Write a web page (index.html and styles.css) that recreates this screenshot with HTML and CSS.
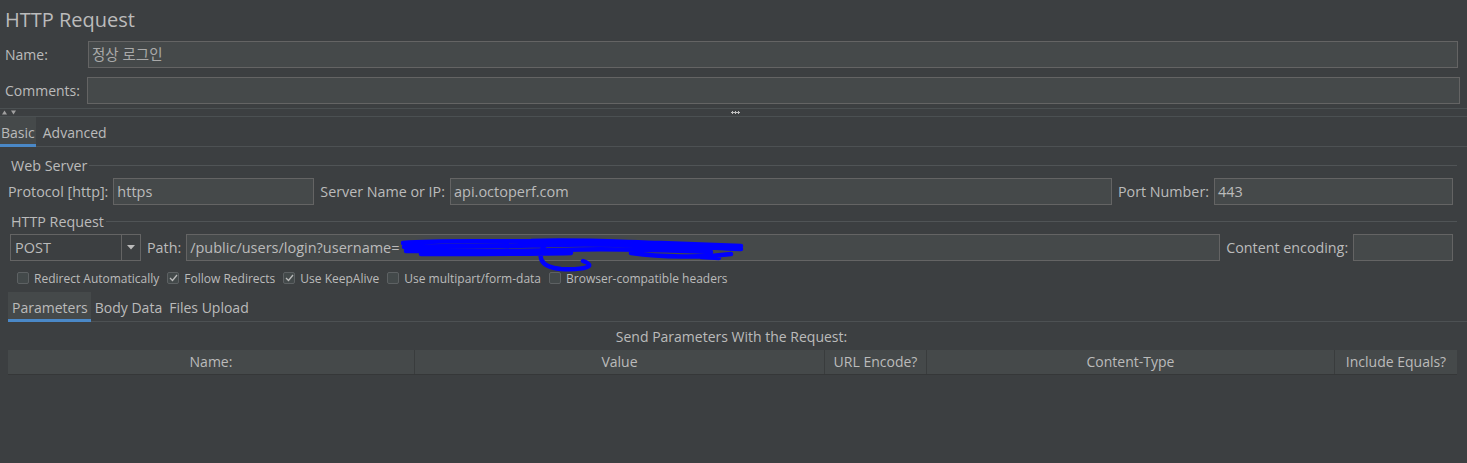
FILE: index.html
```html
<!DOCTYPE html>
<html>
<head>
<meta charset="utf-8">
<link rel="stylesheet" href="styles.css">
</head>
<body>
<div class="page">
  <div class="title">HTTP Request</div>
  <div class="nrow">
    <span class="lbl">Name:</span>
    <div class="input name-input">정상 로그인</div>
  </div>
  <div class="nrow second">
    <span class="lbl">Comments:</span>
    <div class="input comments-input"></div>
  </div>
  <div class="splitter">
    <svg class="arrows" width="16" height="5" viewBox="0 0 16 5"><path d="M1 4.5 L3.5 0.5 L6 4.5 Z" fill="#a0a0a0"/><path d="M10 0.5 L15 0.5 L12.5 4.5 Z" fill="#a0a0a0"/></svg>
    <span class="dots"></span>
  </div>
  <div class="tabs">
    <div class="tab active">Basic</div>
    <div class="tab">Advanced</div>
  </div>
  <div class="group">
    <div class="legend first"><span>Web Server</span></div>
    <div class="frow">
      <span class="flbl">Protocol [http]:</span>
      <div class="input w-proto">https</div>
      <span class="flbl">Server Name or IP:</span>
      <div class="input w-server">api.octoperf.com</div>
      <span class="flbl">Port Number:</span>
      <div class="input w-port">443</div>
    </div>
    <div class="legend"><span>HTTP Request</span></div>
    <div class="frow">
      <div class="combo"><span class="combo-val">POST</span><span class="combo-btn"><svg width="8" height="5" viewBox="0 0 8 5"><path d="M0 0 L8 0 L4 4.5 Z" fill="#bbbbbb"/></svg></span></div>
      <span class="flbl">Path:</span>
      <div class="input w-path">/public/users/login?username=<svg class="scribble" width="345" height="36" viewBox="0 0 345 36"><path d="M2 6 C40 3 90 5 130 4 C170 2 220 5 260 6 C290 7 320 8 340 9 M3 10 C50 8 100 10 150 8 C200 6 250 9 300 10 C320 11 332 12 340 12 M5 14 C60 13 110 15 160 13 C210 11 260 13 310 15 M20 17 C80 17 130 17 170 16 M145 7 C136 18 137 30 160 32 C185 33 196 29 182 24 M230 16 C260 20 300 21 330 17 M300 20 L318 21" stroke="#0000ff" stroke-width="4.5" fill="none" stroke-linecap="round"/></svg></div>
      <span class="flbl">Content encoding:</span>
      <div class="input w-enc"></div>
    </div>
    <div class="checks">
      <label class="chk"><span class="box"></span>Redirect Automatically</label>
      <label class="chk"><span class="box on"><svg width="9" height="8" viewBox="0 0 9 8"><path d="M1 4 L3.5 6.5 L8 1" stroke="#bbbbbb" stroke-width="1.3" fill="none"/></svg></span>Follow Redirects</label>
      <label class="chk"><span class="box on"><svg width="9" height="8" viewBox="0 0 9 8"><path d="M1 4 L3.5 6.5 L8 1" stroke="#bbbbbb" stroke-width="1.3" fill="none"/></svg></span>Use KeepAlive</label>
      <label class="chk"><span class="box"></span>Use multipart/form-data</label>
      <label class="chk"><span class="box"></span>Browser-compatible headers</label>
    </div>
    <div class="tabs subtabs">
      <div class="tab active">Parameters</div>
      <div class="tab">Body Data</div>
      <div class="tab">Files Upload</div>
    </div>
    <div class="send">Send Parameters With the Request:</div>
    <div class="thead">
      <div class="th c-name">Name:</div>
      <div class="th c-value">Value</div>
      <div class="th c-url">URL Encode?</div>
      <div class="th c-ct">Content-Type</div>
      <div class="th c-inc">Include Equals?</div>
    </div>
  </div>
</div>
</body>
</html>
```
FILE: styles.css
```css
html, body {
  margin: 0;
  padding: 0;
  background: #3c3f41;
}
body {
  width: 1467px;
  height: 463px;
  overflow: hidden;
  font-family: "Open Sans", "Noto Sans", "Noto Sans CJK KR", sans-serif;
  font-size: 14px;
  color: #bbbbbb;
}
.page {
  display: flex;
  flex-direction: column;
}
.title {
  font-size: 20px;
  padding: 6px 0 0 5px;
  height: 41px;
  line-height: 28px;
  box-sizing: border-box;
}
.nrow {
  display: grid;
  grid-template-columns: 82px 1fr;
  align-items: center;
  padding-left: 5px;
  height: 27px;
}
.nrow.second {
  margin-top: 9px;
}
.lbl {
  font-size: 14px;
}
.input {
  background: #45494a;
  border: 1px solid #646464;
  box-sizing: border-box;
  height: 27px;
  line-height: 25px;
  padding-left: 3px;
  font-size: 14.5px;
  color: #bbbbbb;
  white-space: nowrap;
  position: relative;
}
.name-input {
  margin-right: 9px;
  margin-left: 1px;
  color: #a9a9a9;
}
.comments-input {
  margin-right: 7px;
}
.splitter {
  height: 7px;
  border-top: 1px solid #4b5052;
  border-bottom: 1px solid #4b5052;
  margin-top: 4px;
  position: relative;
  display: flex;
  align-items: center;
  justify-content: center;
}
.arrows {
  position: absolute;
  left: 1px;
  top: 1px;
}
.dots {
  width: 9px;
  height: 3px;
  background: radial-gradient(circle, #c0c0c0 1.2px, transparent 1.4px) 0 0 / 3px 3px repeat-x;
  margin-left: 3px;
}
.tabs {
  display: flex;
  height: 30px;
  border-bottom: 1px solid #4d5153;
  box-sizing: border-box;
}
.tab {
  font-size: 14px;
  line-height: 31px;
  padding: 0 1px;
  margin-right: 6px;
  box-sizing: border-box;
  height: 30px;
}
.tab.active {
  background: #45494a;
  border-bottom: 3px solid #4a88c7;
}
.group {
  padding: 0 8px;
  display: flex;
  flex-direction: column;
}
.legend {
  display: flex;
  align-items: center;
  height: 20px;
  margin-top: 6px;
  padding-left: 3px;
  font-size: 14.3px;
}
.legend.first {
  margin-top: 8px;
}
.legend::after {
  content: "";
  flex: 1;
  height: 1px;
  background: #505456;
  margin-left: 2px;
  margin-right: 2px;
}
.frow {
  display: flex;
  align-items: center;
  height: 27px;
  margin-top: 3px;
}
.flbl {
  font-size: 14.3px;
  margin: 0 5px 0 6px;
  white-space: nowrap;
}
.frow .flbl:first-child { margin-left: 0; }
.w-proto { width: 201px; }
.w-server { width: 662px; }
.w-port { width: 239px; }
.combo {
  margin-left: 2px;
  width: 131px;
  height: 27px;
  border: 1px solid #646464;
  box-sizing: border-box;
  display: flex;
  background: #3c3f41;
}
.combo-val {
  flex: 1;
  line-height: 25px;
  padding-left: 4px;
  font-size: 14.5px;
}
.combo-btn {
  width: 18px;
  border-left: 1px solid #646464;
  display: flex;
  align-items: center;
  justify-content: center;
}
.w-path { width: 1034px; }
.w-enc { width: 100px; }
.scribble {
  position: absolute;
  left: 214px;
  top: 2px;
}
.checks {
  display: flex;
  align-items: center;
  height: 18px;
  margin-top: 8px;
  padding-left: 9px;
  font-size: 12px;
}
.chk {
  display: flex;
  align-items: center;
  margin-right: 8px;
}
.box {
  width: 10px;
  height: 10px;
  border: 1px solid #5d6163;
  background: #43494a;
  border-radius: 2px;
  margin-right: 5px;
  display: flex;
  align-items: center;
  justify-content: center;
}
.subtabs {
  margin-top: 5px;
  margin-right: -8px;
}
.subtabs .tab {
  padding: 0 3px 0 4px;
  margin-right: 0;
}
.send {
  text-align: center;
  height: 28px;
  line-height: 30px;
  font-size: 14px;
  margin-right: 4px;
}
.thead {
  display: flex;
  height: 24px;
  margin-right: 2px;
  border-bottom: 1px solid #353738;
}
.th {
  background: #45494a;
  text-align: center;
  line-height: 24px;
  font-size: 14px;
  border-right: 1px solid #393c3d;
  box-sizing: border-box;
}
.c-name { width: 407px; }
.c-value { width: 410px; }
.c-url { width: 102px; }
.c-ct { width: 408px; }
.c-inc { flex: 1; border-right: none; }
```
